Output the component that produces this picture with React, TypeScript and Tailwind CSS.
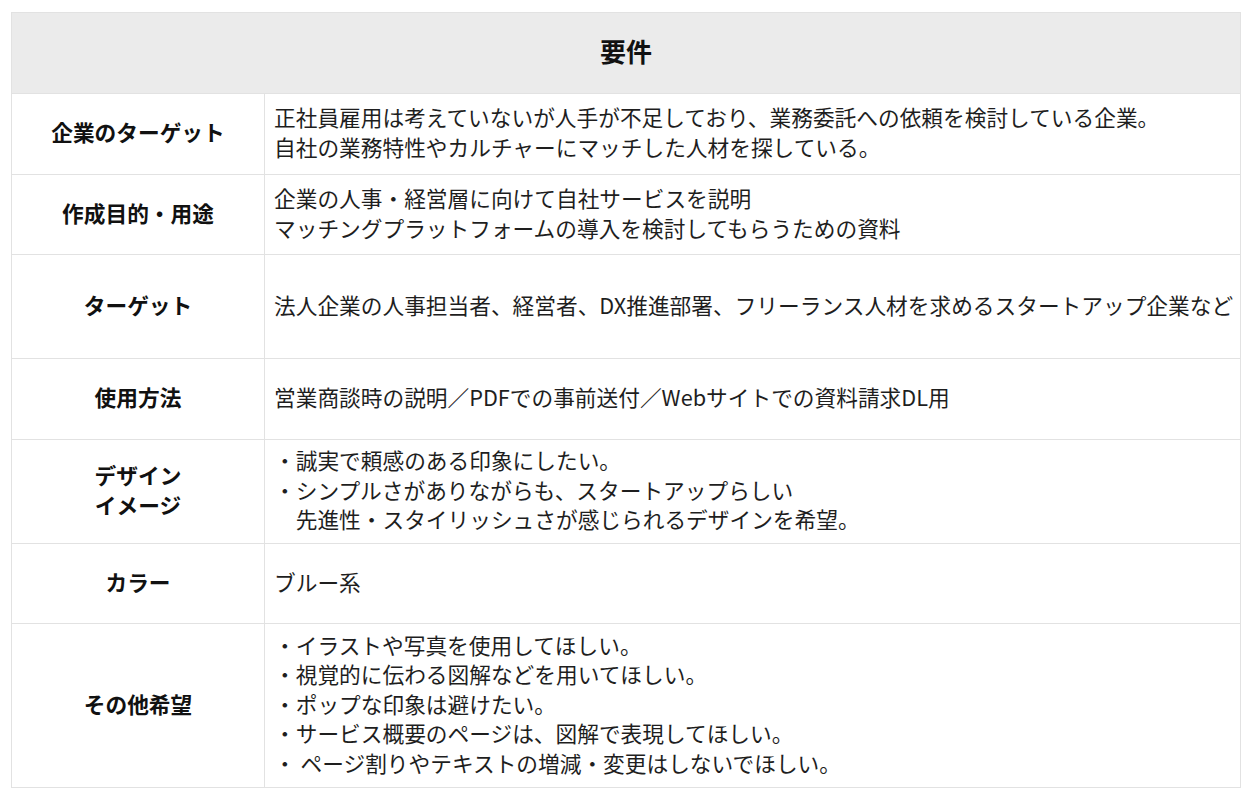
const rows: { label: string[]; lines: string[]; h: string }[] = [
  {
    label: ['企業のターゲット'],
    lines: [
      '正社員雇用は考えていないが人手が不足しており、業務委託への依頼を検討している企業。',
      '自社の業務特性やカルチャーにマッチした人材を探している。',
    ],
    h: 'h-[81px]',
  },
  {
    label: ['作成目的・用途'],
    lines: ['企業の人事・経営層に向けて自社サービスを説明', 'マッチングプラットフォームの導入を検討してもらうための資料'],
    h: 'h-[80px]',
  },
  {
    label: ['ターゲット'],
    lines: ['法人企業の人事担当者、経営者、DX推進部署、フリーランス人材を求めるスタートアップ企業など'],
    h: 'h-[104px]',
  },
  {
    label: ['使用方法'],
    lines: ['営業商談時の説明／PDFでの事前送付／Webサイトでの資料請求DL用'],
    h: 'h-[81px]',
  },
  {
    label: ['デザイン', 'イメージ'],
    lines: [
      '・誠実で頼感のある印象にしたい。',
      '・シンプルさがありながらも、スタートアップらしい',
      '　先進性・スタイリッシュさが感じられるデザインを希望。',
    ],
    h: 'h-[104px]',
  },
  {
    label: ['カラー'],
    lines: ['ブルー系'],
    h: 'h-[80px]',
  },
  {
    label: ['その他希望'],
    lines: [
      '・イラストや写真を使用してほしい。',
      '・視覚的に伝わる図解などを用いてほしい。',
      '・ポップな印象は避けたい。',
      '・サービス概要のページは、図解で表現してほしい。',
      '・ ページ割りやテキストの増減・変更はしないでほしい。',
    ],
    h: 'h-[163px]',
  },
];

export default function App() {
  return (
    <div
      className="min-h-[803px] w-[1250px] bg-white pt-[12px] pl-[11px]"
      style={{ fontFamily: '"Noto Sans CJK JP", "Noto Sans", sans-serif' }}
    >
      <div className="w-[1230px] border border-[#e2e2e2]">
        <div className="flex h-[81px] items-center justify-center border-b border-[#e2e2e2] bg-[#ebebeb] pb-[5px]">
          <span className="text-[26px] font-bold text-[#111]">要件</span>
        </div>
        {rows.map((row, i) => (
          <div
            key={i}
            className={`flex ${row.h} ${i < rows.length - 1 ? 'border-b border-[#e2e2e2]' : ''}`}
          >
            <div className="flex w-[253px] shrink-0 flex-col items-center justify-center border-r border-[#e2e2e2] pb-[4px] text-[21.7px] leading-[30px] font-bold text-[#111]">
              {row.label.map((l) => (
                <div key={l}>{l}</div>
              ))}
            </div>
            <div className="flex flex-1 flex-col justify-center pb-[4px] pl-[9px] text-[21.7px] leading-[29.6px] whitespace-pre text-[#1e1e1e]">
              {row.lines.map((l) => (
                <div key={l}>{l}</div>
              ))}
            </div>
          </div>
        ))}
      </div>
    </div>
  );
}
